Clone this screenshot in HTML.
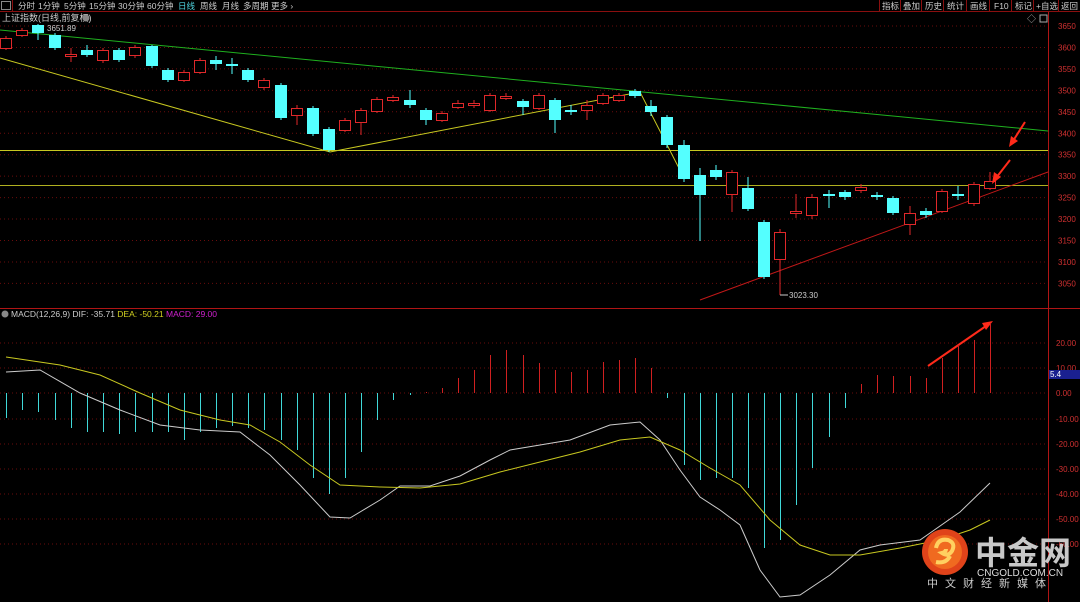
<!DOCTYPE html>
<html><head><meta charset="utf-8">
<style>
html,body{margin:0;padding:0;background:#000;width:1080px;height:602px;overflow:hidden}
svg{display:block}
text{font-family:"Liberation Sans","Noto Sans CJK SC",sans-serif}
</style></head>
<body>
<svg id="s" width="1080" height="602" viewBox="0 0 1080 602" xmlns="http://www.w3.org/2000/svg">
<rect width="1080" height="602" fill="#000"/>
<line x1="0" y1="11.5" x2="1080" y2="11.5" stroke="#8a0f0f"/>
<rect x="1.5" y="1.5" width="9" height="8" fill="none" stroke="#888"/>
<line x1="12.5" y1="0" x2="12.5" y2="11" stroke="#8a0f0f"/>
<g font-size="8.5" fill="#ccc">
<text x="18" y="9">分时</text><text x="38" y="9">1分钟</text><text x="64" y="9">5分钟</text><text x="89" y="9">15分钟</text><text x="118" y="9">30分钟</text><text x="147" y="9">60分钟</text>
<text x="178" y="9" fill="#4fd5e0">日线</text><text x="200" y="9">周线</text><text x="222" y="9">月线</text><text x="243" y="9">多周期</text><text x="271" y="9">更多 ›</text>
<text x="882" y="9">指标</text><text x="903" y="9">叠加</text><text x="925" y="9">历史</text><text x="947" y="9">统计</text><text x="970" y="9">画线</text><text x="994" y="9">F10</text><text x="1015" y="9">标记</text><text x="1036" y="9">+自选</text><text x="1061" y="9">返回</text>
</g>
<g stroke="#8a0f0f"><line x1="879.5" y1="0" x2="879.5" y2="11"/><line x1="900.5" y1="0" x2="900.5" y2="11"/><line x1="921.5" y1="0" x2="921.5" y2="11"/><line x1="943.5" y1="0" x2="943.5" y2="11"/><line x1="966.5" y1="0" x2="966.5" y2="11"/><line x1="989.5" y1="0" x2="989.5" y2="11"/><line x1="1011.5" y1="0" x2="1011.5" y2="11"/><line x1="1033.5" y1="0" x2="1033.5" y2="11"/><line x1="1058.5" y1="0" x2="1058.5" y2="11"/></g>
<text x="2" y="21" font-size="9" fill="#ccc">上证指数(日线,前复权)</text>
<circle cx="86" cy="18" r="3.5" fill="#888"/>
<text x="1027" y="22" font-size="9" fill="#aaa">◇</text><rect x="1040" y="15" width="7" height="7" fill="none" stroke="#aaa"/>
<g id="grid"></g>
<line x1="1048.5" y1="12" x2="1048.5" y2="602" stroke="#b01515"/>
<line x1="0" y1="308.5" x2="1080" y2="308.5" stroke="#b01515"/>
<g id="lab" font-size="8" fill="#d03030"></g>
<rect x="1049" y="370" width="31" height="9" fill="#1a2090"/><text x="1050" y="377" font-size="8" fill="#fff">5.4</text>
<line x1="0" y1="30" x2="1048" y2="131" stroke="#1fb01f" stroke-width="1"/>
<line x1="0" y1="150.5" x2="1048" y2="150.5" stroke="#c8c820"/>
<line x1="0" y1="185.5" x2="1048" y2="185.5" stroke="#b0b020"/>
<polyline points="0,58 330,152 640,92 684,178" fill="none" stroke="#c8c820"/>
<line x1="700" y1="300" x2="1048" y2="172" stroke="#c01818"/>
<g id="cand"></g>
<text x="789" y="298" font-size="8" fill="#ccc">3023.30</text>
<line x1="780" y1="295" x2="788" y2="295" stroke="#ccc"/>
<text x="47" y="31" font-size="8" fill="#ccc">3651.89</text>
<g stroke="#ff2a1a" fill="#ff2a1a" stroke-width="2">
<line x1="1025" y1="122" x2="1013" y2="141"/><polygon points="1009,147 1011,136 1018,141" stroke="none"/>
<line x1="1010" y1="160" x2="996" y2="178"/><polygon points="992,184 994,172 1001,177" stroke="none"/>
<line x1="928" y1="366" x2="986" y2="326"/><polygon points="993,321 982,323 986,330" stroke="none"/>
</g>
<circle cx="5" cy="314" r="3.5" fill="#888"/>
<text x="11" y="317" font-size="8.5" fill="#ccc">MACD(12,26,9) DIF: -35.71 <tspan fill="#d0d020">DEA: -50.21</tspan> <tspan fill="#d020d0">MACD: 29.00</tspan></text>
<g id="mb"></g>
<polyline points="6,372 40,370 80,393 120,410 160,425 200,430 240,432 270,455 300,485 330,517 350,518 380,500 400,486 430,486 460,476 490,460 510,450 540,445 570,440 610,425 640,422 660,440 680,470 700,497 720,510 740,525 760,570 780,597 800,595 830,575 860,550 880,545 920,540 960,512 990,483" fill="none" stroke="#ccc"/>
<polyline points="6,357 60,365 100,375 140,393 180,410 220,420 250,425 280,442 310,465 340,485 380,487 420,488 460,484 500,472 540,462 580,452 620,440 650,437 680,450 710,468 740,485 770,520 800,545 830,555 860,555 900,548 940,540 970,530 990,520" fill="none" stroke="#c8c820"/>
<circle cx="945" cy="552" r="23" fill="#e0431a"/>
<circle cx="945" cy="552" r="17" fill="#f06a20"/>
<path d="M936,548 q2,-10 12,-8 q8,3 4,11 q-4,6 -10,2 q4,-1 4,-4 M950,556 q-4,8 -14,6" fill="none" stroke="#ffd060" stroke-width="4"/>
<text x="975" y="564" font-size="32" font-weight="bold" fill="#c8c8c8" font-family="Noto Sans CJK SC,sans-serif">中金网</text>
<text x="977" y="576" font-size="10" fill="#ddd">CNGOLD.COM.CN</text>
<text x="927" y="587" font-size="11" fill="#ccc" letter-spacing="7">中文财经新媒体</text>
</svg>
<script>
var NS="http://www.w3.org/2000/svg";
function el(p,t,a){var e=document.createElementNS(NS,t);for(var k in a)e.setAttribute(k,a[k]);document.getElementById(p).appendChild(e);return e}
for(var p=3650;p>=3050;p-=50){var y=26+(3650-p)/50*21.45;el('grid','line',{x1:0,x2:1048,y1:y,y2:y,stroke:'#6a0c0c','stroke-dasharray':'1,3'});var t=el('lab','text',{x:1058,y:y+3});t.textContent=p;}
var ml=[[20,343],[10,368],[0,393],[-10,419],[-20,444],[-30,469],[-40,494],[-50,519],[-60,544]];
ml.forEach(function(m){el('grid','line',{x1:0,x2:1048,y1:m[1],y2:m[1],stroke:'#6a0c0c','stroke-dasharray':'1,3'});var t=el('lab','text',{x:1056,y:m[1]+3});t.textContent=m[0].toFixed(2);});
var C=[[6,38,48,'r',36,50],[22,30,35,'r',28,37],[38,25,33,'c',24,40],[55,35,48,'c',33,50],[71,54,56,'r',48,62],[87,50,55,'c',45,57],[103,50,60,'r',48,63],[119,50,60,'c',48,62],[135,47,55,'r',45,58],[152,46,66,'c',45,68],[168,70,80,'c',68,82],[184,72,80,'r',70,82],[200,60,72,'r',58,74],[216,60,64,'c',56,70],[232,64,66,'c',58,74],[248,70,80,'c',68,82],[264,80,87,'r',78,90],[281,85,118,'c',83,120],[297,108,115,'r',105,125],[313,108,134,'c',106,136],[329,129,150,'c',127,152],[345,120,130,'r',118,132],[361,110,122,'r',108,135],[377,99,111,'r',97,113],[393,97,100,'r',95,102],[410,100,105,'c',90,108],[426,110,120,'c',108,125],[442,113,120,'r',111,122],[458,103,107,'r',100,109],[474,103,105,'r',100,108],[490,95,110,'r',93,112],[506,96,98,'r',93,100],[523,101,107,'c',99,115],[539,95,108,'r',93,110],[555,100,120,'c',98,133],[571,110,112,'c',105,115],[587,105,110,'r',100,120],[603,95,103,'r',93,105],[619,95,100,'r',93,102],[635,91,96,'c',89,98],[651,106,112,'c',100,116],[667,117,145,'c',115,148],[684,145,179,'c',140,182],[700,175,195,'c',168,241],[716,170,177,'c',165,180],[732,172,194,'r',170,212],[748,188,209,'c',177,211],[764,222,277,'c',220,279],[780,232,259,'r',229,295],[796,211,213,'r',194,218],[812,197,215,'r',194,219],[829,194,196,'c',190,208],[845,192,197,'c',190,200],[861,187,190,'r',184,193],[877,195,197,'c',192,200],[893,198,213,'c',196,215],[910,213,224,'r',206,235],[926,211,215,'c',208,218],[942,191,211,'r',189,213],[958,194,196,'c',186,200],[974,184,203,'r',182,206],[990,181,188,'r',172,190]];
C.forEach(function(c){var col=c[3]=='r'?'#e0282a':'#54ffff';el('cand','line',{x1:c[0],x2:c[0],y1:c[4],y2:c[5],stroke:col});
if(c[3]=='r'){el('cand','rect',{x:c[0]-5.5,y:c[1]+.5,width:11,height:Math.max(1,c[2]-c[1]),fill:'#000',stroke:col});}
else el('cand','rect',{x:c[0]-6,y:c[1],width:12,height:Math.max(1.5,c[2]-c[1]),fill:col});});
var B=[[6,418],[22,410],[38,412],[55,420],[71,428],[87,432],[103,432],[119,434],[135,432],[152,432],[168,432],[184,440],[200,432],[216,428],[232,426],[248,428],[264,430],[281,440],[297,450],[313,478],[329,494],[345,478],[361,452],[377,420],[393,400],[410,395],[426,392],[442,388],[458,378],[474,370],[490,355],[506,350],[523,355],[539,363],[555,370],[571,372],[587,370],[603,362],[619,360],[635,358],[651,368],[667,398],[684,465],[700,480],[716,478],[732,478],[748,488],[764,548],[780,540],[796,505],[812,468],[829,437],[845,408],[861,384],[877,375],[893,376],[910,376],[926,378],[942,358],[958,345],[974,340],[990,323]];
B.forEach(function(b){el('mb','line',{x1:b[0]+.5,x2:b[0]+.5,y1:393,y2:b[1],stroke:b[1]<393?'#d02020':'#40d8d8'});});
</script>
</body></html>
